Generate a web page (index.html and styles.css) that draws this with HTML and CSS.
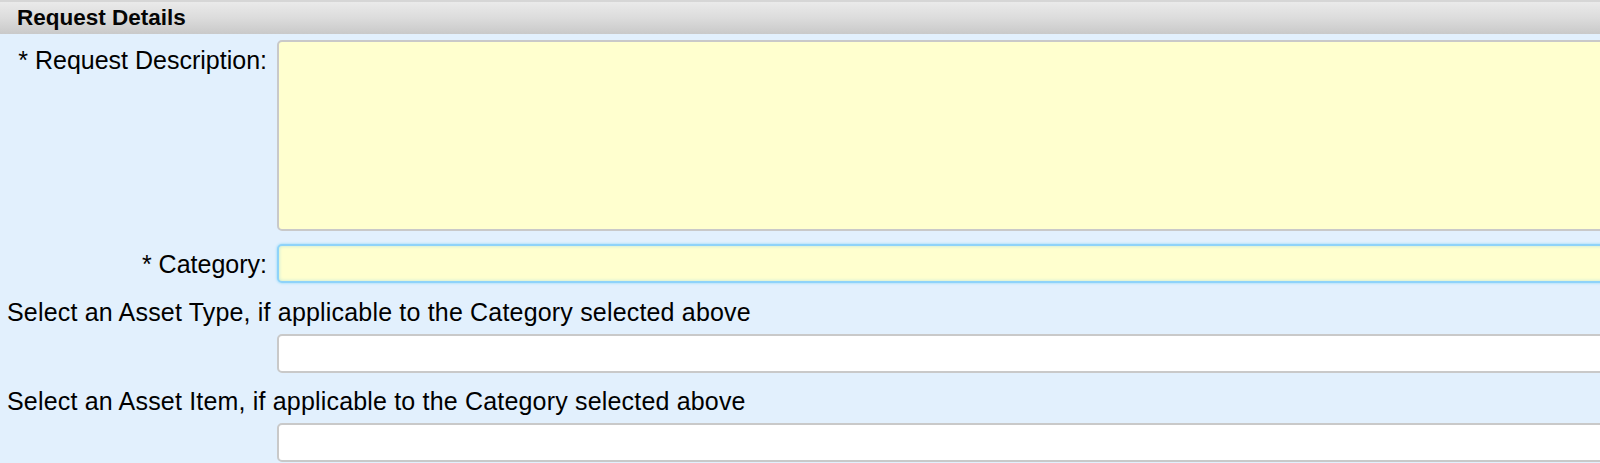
FILE: index.html
```html
<!DOCTYPE html>
<html>
<head>
<meta charset="utf-8">
<link rel="stylesheet" href="styles.css">
</head>
<body>
<div class="panel">
  <div class="panel-header">Request Details</div>
  <div class="panel-body">
    <div class="field-row">
      <label class="field-label">* Request Description:</label>
      <div class="field-control"><textarea class="input textarea required"></textarea></div>
    </div>
    <div class="field-row">
      <label class="field-label">* Category:</label>
      <div class="field-control"><input class="input required focused" type="text"></div>
    </div>
    <div class="field-block">
      <div class="block-label">Select an Asset Type, if applicable to the Category selected above</div>
      <div class="field-row">
        <div class="field-label"></div>
        <div class="field-control"><input class="input" type="text"></div>
      </div>
    </div>
    <div class="field-block">
      <div class="block-label">Select an Asset Item, if applicable to the Category selected above</div>
      <div class="field-row">
        <div class="field-label"></div>
        <div class="field-control"><input class="input" type="text"></div>
      </div>
    </div>
  </div>
</div>
</body>
</html>
```
FILE: styles.css
```css
html, body {
  margin: 0;
  padding: 0;
  background: #e2f0fd;
  overflow: hidden;
}
body {
  font-family: "Liberation Sans", Arial, sans-serif;
  color: #000;
  width: 1600px;
  height: 463px;
}
.panel {
  width: 1612px;
}
.panel-header {
  height: 34px;
  box-sizing: border-box;
  border-top: 2px solid #d6d6d6;
  background: linear-gradient(to bottom, #eaeaea 0%, #dcdcdc 50%, #c9c9c9 100%);
  padding-left: 17px;
  font-weight: bold;
  font-size: 22.5px;
  line-height: 31px;
  color: #050505;
}
.panel-body {
  padding-top: 6px;
  display: flex;
  flex-direction: column;
  gap: 13px;
}
.field-row {
  display: grid;
  grid-template-columns: 267px 1fr;
  column-gap: 10px;
  align-items: start;
}
.field-label {
  text-align: right;
  font-size: 25px;
  line-height: 40px;
  white-space: nowrap;
}
.field-control {
  display: flex;
}
.input {
  display: block;
  box-sizing: border-box;
  width: 100%;
  margin: 0;
  height: 39px;
  border: 2px solid #c9c9c9;
  border-radius: 5px;
  background: #fff;
  font-family: inherit;
  font-size: 25px;
  outline: none;
}
.textarea {
  height: 191px;
  resize: none;
}
.required {
  background: #ffffcf;
}
.focused {
  border-color: #8fd3f9;
  box-shadow: 0 0 2px 1px #b9e4fb, inset 0 0 3px 1px #d7f0d8;
}
.field-block {
  display: flex;
  flex-direction: column;
  gap: 7px;
}
.block-label {
  padding-left: 7px;
  font-size: 25px;
  line-height: 30px;
  letter-spacing: 0.18px;
  white-space: nowrap;
}
```
